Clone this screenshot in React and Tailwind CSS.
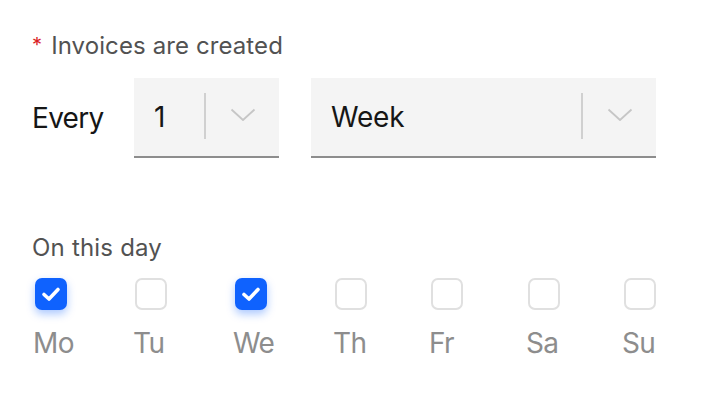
import React, { useState } from 'react';

const font = { fontFamily: 'Inter, "Noto Sans", sans-serif' };

const Chevron = () => (
    <svg width="26" height="14" viewBox="0 0 26 14" fill="none">
        <polyline points="1.5,1.5 13,12 24.5,1.5" stroke="#c6c6c6" strokeWidth="1.8" strokeLinejoin="round" />
    </svg>
);

const Select = ({ value, width }) => (
    <div className={`relative flex items-center h-[80px] bg-[#f4f4f4] border-b-2 border-[#8d8d8d] ${width}`}>
        <span className="pl-[20px] text-[28px] text-[#161616] tracking-[-0.2px]">{value}</span>
        <div className="ml-auto flex items-center h-full">
            <div className="w-[2px] h-[46px] bg-[#d0d0d0] mb-[2px]"></div>
            <div className="ml-[24px] mr-[23px] mt-[-4px] flex items-center">
                <Chevron />
            </div>
        </div>
    </div>
);

const DayBox = ({ label, checked, onToggle }) => (
    <div className="flex flex-col items-start">
        <button
            onClick={onToggle}
            className={`w-[32px] h-[32px] rounded-[7px] flex items-center justify-center ${checked ? 'bg-[#0f62fe] shadow-[0_4px_8px_rgba(15,98,254,0.35)]' : 'border-2 border-[#e0e0e0] bg-white'}`}
        >
            {checked && (
                <svg width="32" height="32" viewBox="0 0 32 32" fill="none">
                    <polyline points="9,16.5 14,21 23,11.5" stroke="white" strokeWidth="3.6" strokeLinecap="round" strokeLinejoin="round" />
                </svg>
            )}
        </button>
        <span className="mt-[15px] -ml-[2px] text-[28px] leading-[36px] text-[#8d8d8d] tracking-[-0.6px]">{label}</span>
    </div>
);

const App = () => {
    const [days, setDays] = useState({ Mo: true, Tu: false, We: true, Th: false, Fr: false, Sa: false, Su: false });

    const toggle = (d) => setDays({ ...days, [d]: !days[d] });

    return (
        <div className="w-[704px] h-[412px] bg-white pt-[30px] pl-[32px]" style={font}>
            {/* Frequency label */}
            <div className="text-[24px] leading-[32px] text-[#525252] tracking-[0.1px]">
                <span className="text-[#da1e28] mr-[9px] text-[20px] relative top-[-2px]">*</span>
                Invoices are created
            </div>

            {/* Every N unit */}
            <div className="flex items-center mt-[15px]">
                <span className="w-[102px] text-[28px] text-[#161616] tracking-[-0.7px]">Every</span>
                <Select value="1" width="w-[145px]" />
                <div className="w-[32px]"></div>
                <Select value="Week" width="w-[345px]" />
            </div>

            {/* Day picker */}
            <div className="mt-[74px] text-[24px] leading-[32px] text-[#525252] tracking-[0.2px]">On this day</div>
            <div className="grid grid-cols-[100px_100px_100px_96px_97px_96px_auto] mt-[14px] ml-[3px]">
                {Object.keys(days).map(d => (
                    <DayBox key={d} label={d} checked={days[d]} onToggle={() => toggle(d)} />
                ))}
            </div>
        </div>
    );
};

export default App;
